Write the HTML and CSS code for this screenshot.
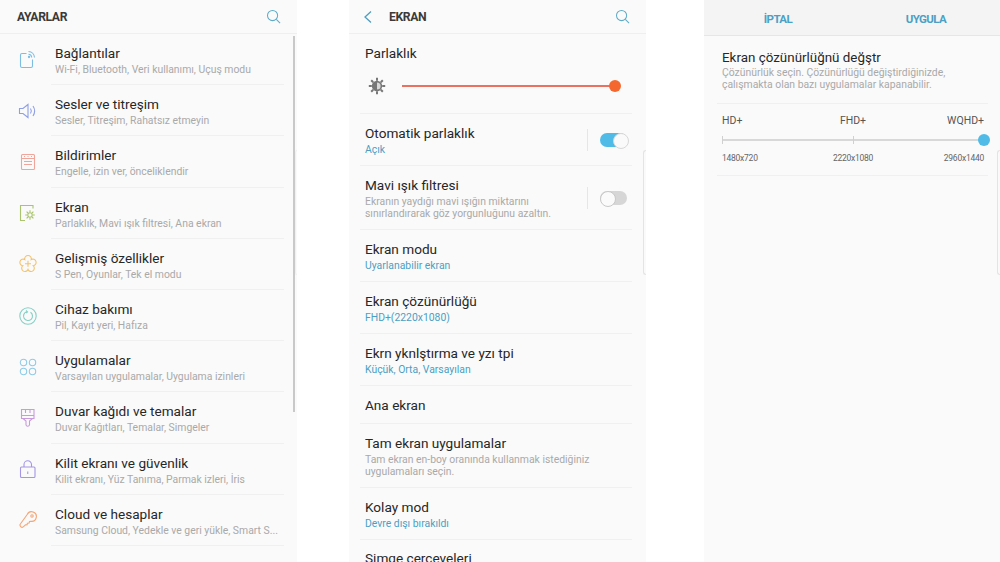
FILE: index.html
```html
<!DOCTYPE html>
<html lang="en">
<head>
  <meta charset="UTF-8" />
  <title>Ayarlar</title>
  <link rel="stylesheet" href="styles.css">
</head>
<body>
  <div class="page">

    <!-- Settings list -->
    <section class="phone phone-list">
      <header class="topbar">
        <h1>AYARLAR</h1>
        <svg class="search" viewBox="0 0 16 16"><circle cx="7" cy="7" r="5.4"/><path d="M11 11l4 4"/></svg>
      </header>
      <div class="edge-handle edge-faint"></div>
      <div class="scrollbar"></div>
      <ul class="menu">
        <li>
          <svg class="icon" viewBox="0 0 20 20" stroke="#7dbde2"><path d="M8.500 3.500H4A1.500 1.500 0 0 0 2.500 5v11A1.500 1.500 0 0 0 4 17.500h9a1.500 1.500 0 0 0 1.500-1.500V9.500"/><path d="M10.500 1.500c3.300.2 5.800 2.700 6 6M10.500 4.300c1.800.1 3.100 1.400 3.200 3.200"/><circle cx="11" cy="7" r=".6"/></svg>
          <div><h3>Bağlantılar</h3><p>Wi-Fi, Bluetooth, Veri kullanımı, Uçuş modu</p></div>
        </li>
        <li>
          <svg class="icon" viewBox="0 0 20 20" stroke="#8f9fe6"><path d="M1.500 7.500v5h3.500l5 4v-13l-5 4z"/><path d="M12.500 7.500c1 1.500 1 3.500 0 5M15 5c2 3 2 7 0 10"/></svg>
          <div><h3>Sesler ve titreşim</h3><p>Sesler, Titreşim, Rahatsız etmeyin</p></div>
        </li>
        <li>
          <svg class="icon" viewBox="0 0 20 20" stroke="#f0a59b"><rect x="3.500" y="2.500" width="13" height="15" rx="1"/><path d="M3.500 6.500h13M6 9.500h8M6 12.500h8M6 4.500h1M9.500 4.500h1M13 4.500h1"/></svg>
          <div><h3>Bildirimler</h3><p>Engelle, izin ver, önceliklendir</p></div>
        </li>
        <li>
          <svg class="icon" viewBox="0 0 20 20" stroke="#a9c46c"><path d="M15 5.500V2.500H2.500v15H7"/><circle cx="12" cy="12" r="2.200"/><path d="M12 7.200v2M12 14.800v2M7.200 12h2M14.800 12h2M8.600 8.600L10 10M14 14l1.400 1.400M8.600 15.400L10 14M14 10l1.400-1.400"/></svg>
          <div><h3>Ekran</h3><p>Parlaklık, Mavi ışık filtresi, Ana ekran</p></div>
        </li>
        <li>
          <svg class="icon" viewBox="0 0 20 20" stroke="#f2c36f"><path d="M6.800 5.550A3.300 3.300 0 1 1 13.200 5.550 3.300 3.300 0 1 1 15.200 11.700 3.300 3.300 0 1 1 10 15.500 3.300 3.300 0 1 1 4.800 11.700 3.300 3.300 0 1 1 6.800 5.550z"/><path d="M10 6.800v6M7 9.800h6"/></svg>
          <div><h3>Gelişmiş özellikler</h3><p>S Pen, Oyunlar, Tek el modu</p></div>
        </li>
        <li>
          <svg class="icon" viewBox="0 0 20 20" stroke="#86d0c4"><circle cx="10" cy="10" r="8.200"/><path d="M8.500 5.800A4.500 4.500 0 1 0 12.500 6.300"/><path d="M8 4.500l1.500 1.500L8 7"/></svg>
          <div><h3>Cihaz bakımı</h3><p>Pil, Kayıt yeri, Hafıza</p></div>
        </li>
        <li>
          <svg class="icon" viewBox="0 0 20 20" stroke="#8fcbe8"><circle cx="5.500" cy="5.500" r="3.200"/><circle cx="14.500" cy="5.500" r="3.200"/><circle cx="5.500" cy="14.500" r="3.200"/><circle cx="14.500" cy="14.500" r="3.200"/></svg>
          <div><h3>Uygulamalar</h3><p>Varsayılan uygulamalar, Uygulama izinleri</p></div>
        </li>
        <li>
          <svg class="icon" viewBox="0 0 20 20" stroke="#c99ade"><path d="M3.500 1.500h12.500v9h-12.500zM3.500 7.500h12.500M7.500 1.500v3.500M12 1.500v3.500"/><path d="M5 10.500l3 2.500v3.800a1.800 1.800 0 0 0 3.500 0V13l3-2.500"/></svg>
          <div><h3>Duvar kağıdı ve temalar</h3><p>Duvar Kağıtları, Temalar, Simgeler</p></div>
        </li>
        <li>
          <svg class="icon" viewBox="0 0 20 20" stroke="#a596e6"><rect x="2.500" y="8" width="14.500" height="10.500" rx="1"/><path d="M6 8V5.500a3.750 3.750 0 0 1 7.500 0V8"/><path d="M9.750 12.500v2.500"/></svg>
          <div><h3>Kilit ekranı ve güvenlik</h3><p>Kilit ekranı, Yüz Tanıma, Parmak izleri, İris</p></div>
        </li>
        <li>
          <svg class="icon" viewBox="0 0 20 20" stroke="#f4a677"><path d="M9.200 4.500a4.800 4.800 0 1 1 3.600 6.800l-1.300.2-.4 1.500-1.700.2-.3 1.600-1.600.1-2.500 2.200c-1.400.8-3.800-1.200-2.800-2.900z"/><circle cx="14" cy="6" r="1.200"/></svg>
          <div><h3>Cloud ve hesaplar</h3><p>Samsung Cloud, Yedekle ve geri yükle, Smart S...</p></div>
        </li>
        <li>
          <svg class="icon" viewBox="0 0 20 20" stroke="#8fcbe8"></svg>
          <div><h3>Google</h3></div>
        </li>
      </ul>
    </section>

    <!-- Display settings -->
    <section class="phone phone-display">
      <header class="topbar">
        <svg class="back" viewBox="0 0 10 14"><path d="M8 1.500L2 7l6 5.500"/></svg>
        <h1>EKRAN</h1>
        <svg class="search" viewBox="0 0 16 16"><circle cx="7" cy="7" r="5.400"/><path d="M11 11l4 4"/></svg>
      </header>
      <div class="edge-handle"></div>
      <div class="row row-brightness">
        <h3>Parlaklık</h3>
        <div class="brightness">
          <svg class="sun" viewBox="0 0 18 18"><circle cx="9" cy="9" r="5.200" fill="#777"/><path d="M9 .8v3M9 14.200v3M.8 9h3M14.200 9h3M3.200 3.200l2 2M12.800 12.800l2 2M3.200 14.800l2-2M12.800 5.200l2-2" stroke="#777" stroke-width="2"/><path d="M9 5.400a3.600 3.600 0 0 1 0 7.200z" fill="#d8d8d8"/></svg>
          <div class="track-orange"><span class="thumb-orange"></span></div>
        </div>
      </div>
      <div class="row row-two">
        <div class="row-text"><h3>Otomatik parlaklık</h3><p class="value">Açık</p></div>
        <span class="vline"></span>
        <span class="toggle toggle-on"></span>
      </div>
      <div class="row row-desc">
        <div class="row-text"><h3>Mavi ışık filtresi</h3><p>Ekranın yaydığı mavi ışığın miktarını<br>sınırlandırarak göz yorgunluğunu azaltın.</p></div>
        <span class="vline"></span>
        <span class="toggle"></span>
      </div>
      <div class="row row-two"><div class="row-text"><h3>Ekran modu</h3><p class="value">Uyarlanabilir ekran</p></div></div>
      <div class="row row-two"><div class="row-text"><h3>Ekran çözünürlüğü</h3><p class="value">FHD+(2220x1080)</p></div></div>
      <div class="row row-two"><div class="row-text"><h3>Ekrn yknlştırma ve yzı tpi</h3><p class="value">Küçük, Orta, Varsayılan</p></div></div>
      <div class="row row-single"><div class="row-text"><h3>Ana ekran</h3></div></div>
      <div class="row row-desc"><div class="row-text"><h3>Tam ekran uygulamalar</h3><p>Tam ekran en-boy oranında kullanmak istediğiniz<br>uygulamaları seçin.</p></div></div>
      <div class="row row-two"><div class="row-text"><h3>Kolay mod</h3><p class="value">Devre dışı bırakıldı</p></div></div>
      <div class="row row-last"><div class="row-text"><h3>Simge çerçeveleri</h3></div></div>
    </section>

    <!-- Resolution -->
    <section class="phone phone-res">
      <header class="actionbar">
        <span>İPTAL</span>
        <span>UYGULA</span>
      </header>
      <div class="edge-handle"></div>
      <div class="res-intro">
        <h3>Ekran çözünürlüğnü değştr</h3>
        <p>Çözünürlük seçin. Çözünürlüğü değiştirdiğinizde,<br>çalışmakta olan bazı uygulamalar kapanabilir.</p>
      </div>
      <div class="res-picker">
        <div class="res-labels"><span>HD+</span><span>FHD+</span><span>WQHD+</span></div>
        <div class="res-track">
          <i class="tick tick-a"></i><i class="tick tick-b"></i><span class="thumb-blue"></span>
        </div>
        <div class="res-sizes"><span>1480x720</span><span>2220x1080</span><span>2960x1440</span></div>
      </div>
    </section>

  </div>
</body>
</html>
```

FILE: styles.css
```css
* {
  box-sizing: border-box;
}

html, body {
  margin: 0;
  padding: 0;
  background: #fff;
}

body {
  font-family: Roboto, "Liberation Sans", sans-serif;
  color: #252525;
  width: 1000px;
  height: 562px;
  overflow: hidden;
}

h1, h3, p, ul {
  margin: 0;
  padding: 0;
}

.page {
  display: flex;
  height: 562px;
}

.phone {
  position: relative;
  height: 562px;
  background: #fafafa;
  overflow: hidden;
  flex: none;
}

.phone-list {
  width: 297px;
}

.phone-display {
  width: 297px;
  margin-left: 52px;
}

.phone-res {
  width: 296px;
  margin-left: 58px;
}

/* top bars */
.topbar {
  display: flex;
  align-items: center;
  height: 34px;
  padding: 0 16px 0 17px;
  border-bottom: 1px solid #efefef;
}

.topbar h1 {
  flex: 1;
  font-size: 12.2px;
  font-weight: 700;
  letter-spacing: -0.4px;
  color: #3a3a3a;
}

.search {
  width: 15px;
  height: 15px;
  fill: none;
  stroke: #5fabc6;
  stroke-width: 1.1;
}

.back {
  width: 10px;
  height: 14px;
  margin-right: 16px;
  fill: none;
  stroke: #4f9dc0;
  stroke-width: 1.3;
}

.phone-display .topbar {
  padding-left: 14px;
}

/* settings list */
.scrollbar {
  position: absolute;
  left: 293px;
  top: 36px;
  width: 2px;
  height: 376px;
  background: #c9c9c9;
}

.menu {
  list-style: none;
}

.menu li {
  display: flex;
  align-items: center;
  height: 51.2px;
}

.menu li > div {
  flex: none;
  width: 233px;
  height: 100%;
  display: flex;
  flex-direction: column;
  justify-content: center;
  padding: 3px 0 0 4px;
  border-bottom: 1px solid #f0f0f0;
  margin-left: 13px;
}

.icon {
  width: 20px;
  height: 20px;
  margin-left: 18px;
  flex: none;
  fill: none;
  stroke-width: 1.1;
}

h3 {
  font-size: 13.6px;
  font-weight: 400;
  line-height: 17px;
  color: #272727;
}

p {
  font-size: 10.4px;
  line-height: 12px;
  color: #a9a9a9;
}

.menu p {
  margin-top: 2px;
}

/* display rows */
.row {
  display: flex;
  align-items: center;
  margin: 0 14px 0 11px;
  padding-left: 5px;
  border-bottom: 1px solid #f0f0f0;
}

.row-text {
  flex: 1;
  padding-top: 1px;
}

.row-text p {
  margin-top: 2px;
}

.row-brightness {
  display: block;
  height: 80px;
  padding-top: 11px;
}

.brightness {
  display: flex;
  align-items: center;
  margin-top: 15px;
}

.sun {
  width: 18px;
  height: 18px;
  margin-left: 3px;
}

.track-orange {
  position: relative;
  width: 213px;
  height: 2px;
  margin-left: 16px;
  background: #ec7060;
}

.thumb-orange {
  position: absolute;
  right: -6px;
  top: -5px;
  width: 12px;
  height: 12px;
  border-radius: 50%;
  background: #f4682f;
}

.row-two {
  height: 52px;
}

.row-desc {
  height: 64px;
}

.row-single {
  height: 38px;
}

.row-last {
  height: 36px;
  border-bottom: none;
}

.row-text .value {
  color: #4a9fc4;
}

.vline {
  width: 1px;
  height: 22px;
  background: #e6e6e6;
}

.toggle {
  position: relative;
  width: 27px;
  height: 14px;
  margin: 0 5px 0 12px;
  border-radius: 7px;
  background: #d6d6d6;
}

.toggle::after {
  content: "";
  position: absolute;
  left: 0;
  top: 0;
  width: 14px;
  height: 14px;
  border-radius: 50%;
  background: #fafafa;
  border: 1px solid #c8c8c8;
}

.toggle-on {
  background: #4fbbe6;
}

.toggle-on::after {
  left: 13px;
  border-color: #d8d8d8;
}

.edge-handle {
  position: absolute;
  right: 0;
  top: 150px;
  width: 3px;
  height: 125px;
  border: 1px solid #e4e4e4;
  border-right: none;
  border-radius: 3px 0 0 3px;
}

.edge-faint {
  right: 0;
  width: 2px;
  border-color: #f0f0f0;
}

/* resolution panel */
.actionbar {
  display: grid;
  grid-template-columns: 1fr 1fr;
  align-items: center;
  justify-items: center;
  height: 36px;
  padding-top: 3px;
  background: #f4f4f4;
  border-bottom: 1px solid #e6e6e6;
  font-size: 11.5px;
  font-weight: 700;
  letter-spacing: -0.6px;
  color: #4ba0c4;
}

.res-intro {
  margin: 0 12px 0 13px;
  padding: 13px 0 12px 5px;
  border-bottom: 1px solid #f0f0f0;
}

.res-intro h3 {
  font-size: 13.4px;
}

.res-intro p {
  margin-top: 1px;
}

.res-picker {
  margin: 0 12px 0 13px;
  padding: 10px 4px 12px 5px;
  border-bottom: 1px solid #f0f0f0;
}

.res-labels, .res-sizes {
  display: grid;
  grid-template-columns: 1fr 1fr 1fr;
}

.res-labels span:nth-child(2), .res-sizes span:nth-child(2) {
  text-align: center;
}

.res-labels span:nth-child(3), .res-sizes span:nth-child(3) {
  text-align: right;
}

.res-labels {
  font-size: 10.5px;
  line-height: 13px;
  color: #555;
}

.res-track {
  position: relative;
  height: 2px;
  margin-top: 12px;
  background: #d8d8d8;
}

.tick {
  position: absolute;
  top: -3px;
  width: 1px;
  height: 8px;
  background: #d0d0d0;
}

.tick-a {
  left: 0;
}

.tick-b {
  left: 131px;
}

.thumb-blue {
  position: absolute;
  right: -6px;
  top: -5px;
  width: 12px;
  height: 12px;
  border-radius: 50%;
  background: #4fbbe6;
}

.res-sizes {
  margin-top: 12px;
  font-size: 8.5px;
  letter-spacing: -0.25px;
  line-height: 10px;
  color: #666;
}
```
